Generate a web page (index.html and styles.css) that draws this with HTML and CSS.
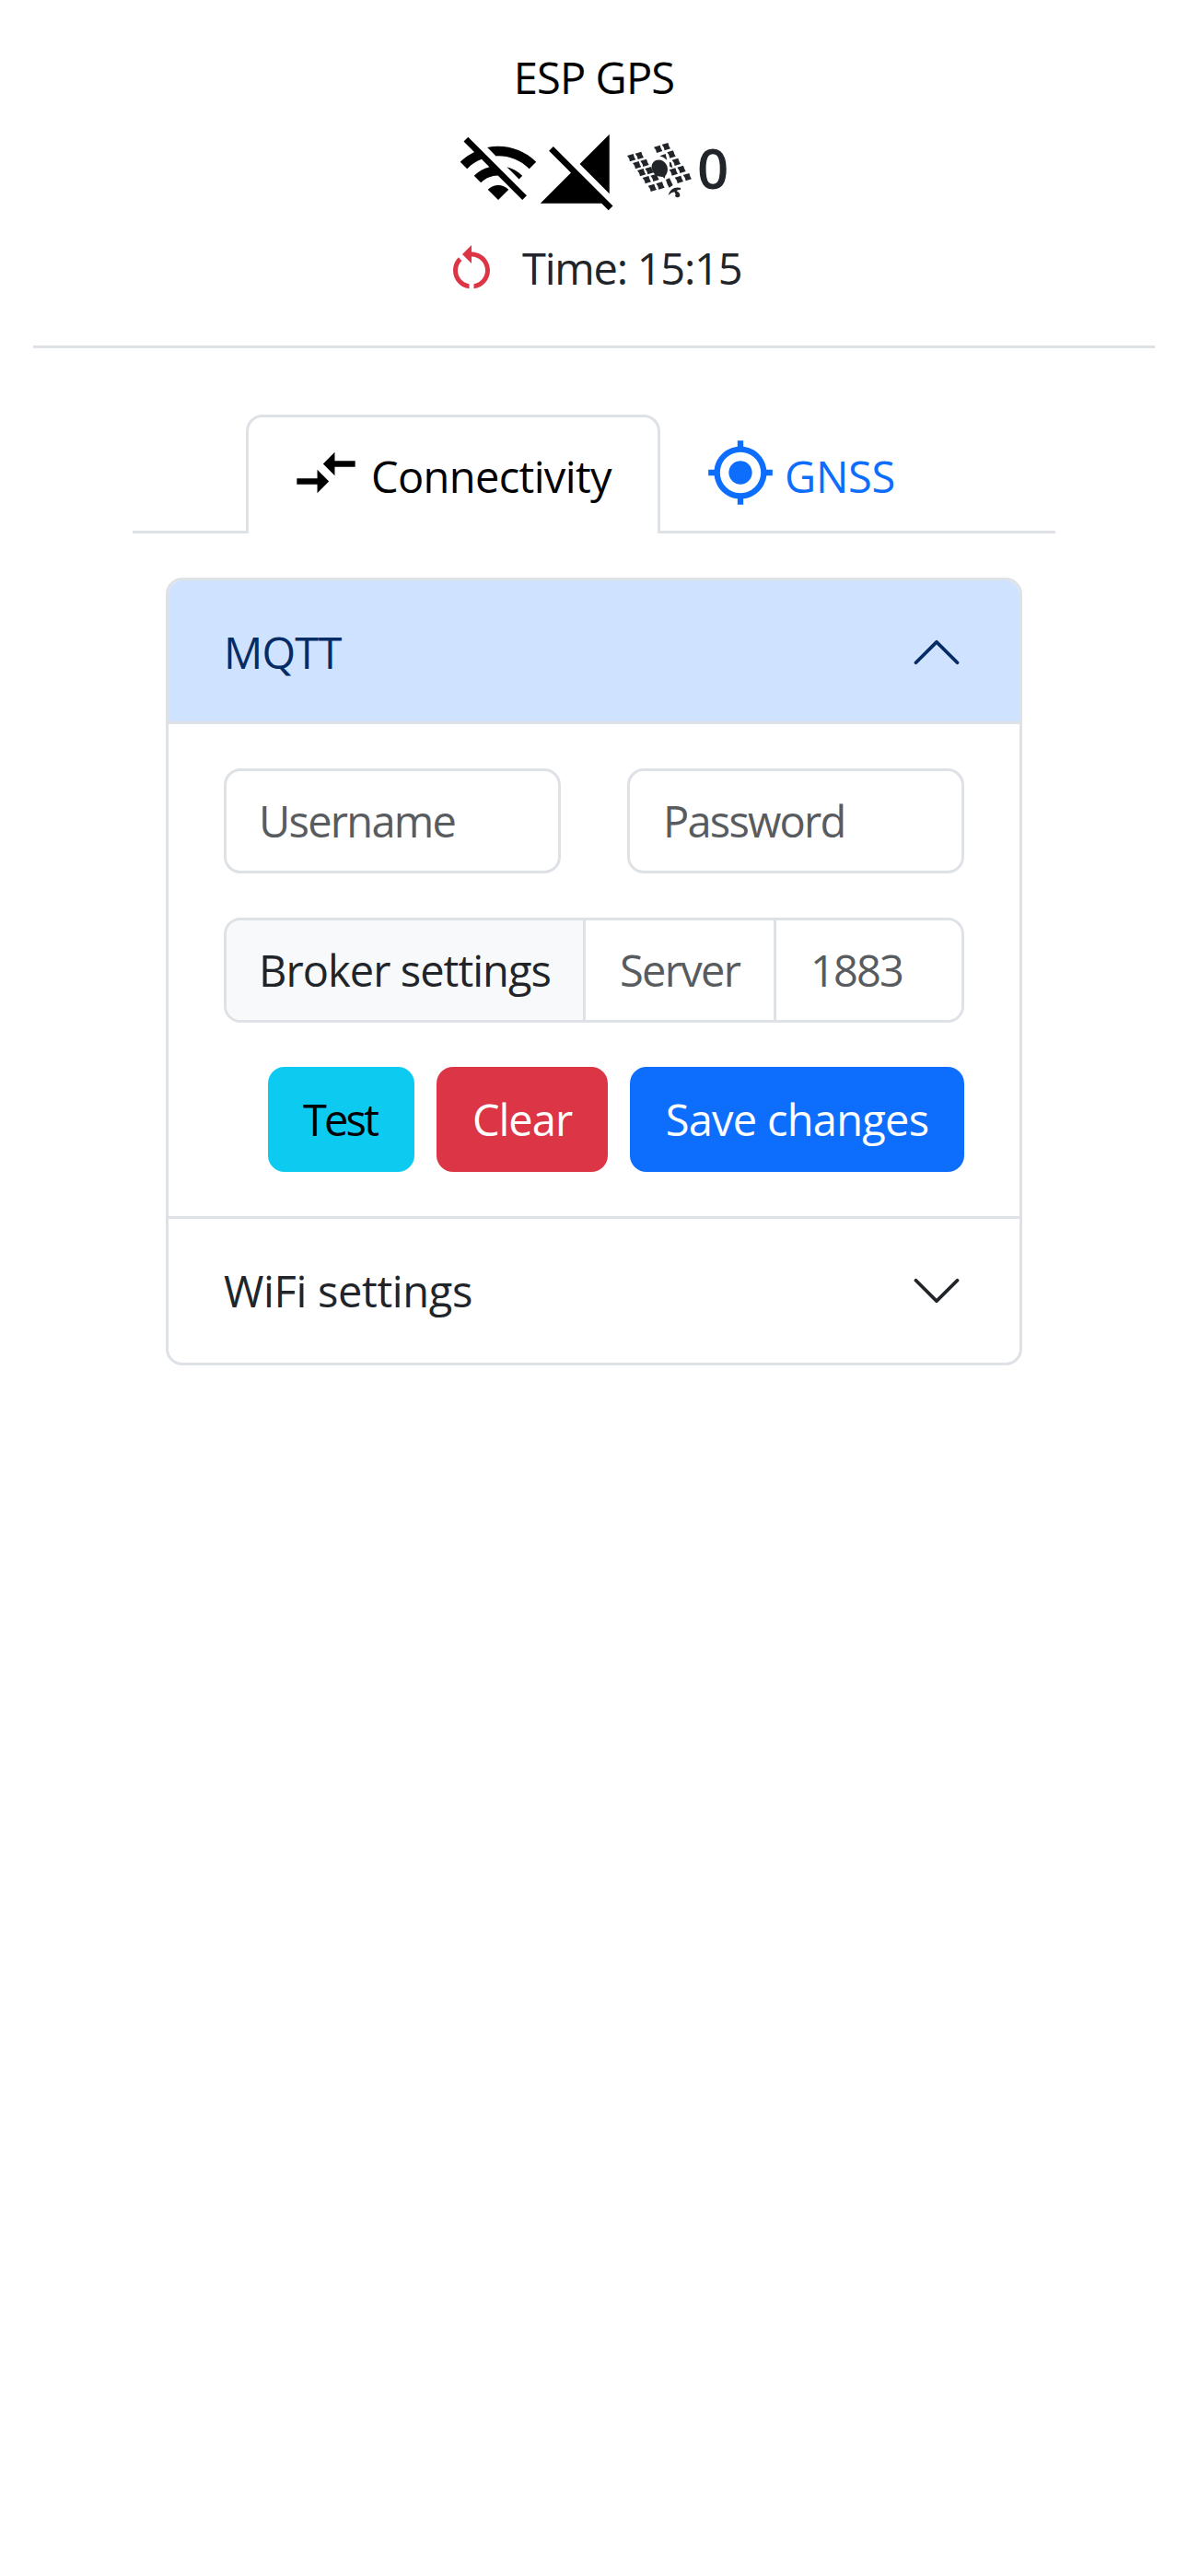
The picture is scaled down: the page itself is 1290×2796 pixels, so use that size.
FILE: index.html
```html
<!DOCTYPE html>
<html lang="en">
<head>
<meta charset="utf-8">
<title>ESP GPS</title>
<link rel="stylesheet" href="styles.css">
</head>
<body>
<header class="header">
  <div class="title">ESP GPS</div>
  <div class="status">
    <svg class="status-icon" viewBox="0 0 24 24"><path d="M22.99 9C19.15 5.16 13.8 3.76 8.84 4.78l2.52 2.52c3.47-.17 6.99 1.05 9.63 3.7l2-2zm-4 4c-1.29-1.29-2.84-2.13-4.49-2.56l3.53 3.53.96-.97zM2 3.05L5.07 6.1C3.6 6.82 2.22 7.78 1 9l1.99 2c1.24-1.24 2.67-2.16 4.2-2.77l2.24 2.24C7.81 10.89 6.27 11.73 5 13v.01L6.99 15c1.36-1.36 3.14-2.04 4.92-2.06L18.98 20l1.27-1.26L3.29 1.79 2 3.05zM9 17l3 3 3-3c-1.65-1.66-4.34-1.66-6 0z"/></svg>
    <svg class="status-icon cellular" viewBox="0 0 24 24"><path d="M21 1l-8.59 8.59L21 18.18V1zM4.77 4.5L3.5 5.77l6.36 6.36L1 21h17.73l2 2L22 21.73 4.77 4.5z"/></svg>
    <svg class="satellite" viewBox="0 0 210 180">
      <defs><path id="cell" d="M-14-6L6-12Q9 0 14 7L-5 13Q-7 1-14-6z"/></defs>
      <use href="#cell" x="14" y="48"/><use href="#cell" x="40" y="41"/>
      <use href="#cell" x="32" y="72"/><use href="#cell" x="57" y="65"/>
      <use href="#cell" x="47" y="96"/><use href="#cell" x="72" y="90"/>
      <use href="#cell" x="64" y="120"/><use href="#cell" x="90" y="113"/>
      <use href="#cell" x="82" y="146"/><use href="#cell" x="108" y="139"/>
      <use href="#cell" x="101" y="20"/><use href="#cell" x="127" y="12"/>
      <path d="M106 43L125 36L130 56Q120 47 106 43z"/><use href="#cell" x="144" y="37"/>
      <path d="M138 63q4-3 6 4l4 13q-8 1-10-4z"/><use href="#cell" x="160" y="62"/>
      <use href="#cell" x="151" y="94"/><use href="#cell" x="177" y="86"/>
      <use href="#cell" x="169" y="119"/><use href="#cell" x="196" y="111"/>
      <path d="M86 62C98 51 119 55 128 71C135 85 132 98 124 108L122 116L116 111C99 111 87 104 82 91C78 80 79 69 86 62z"/>
      <path d="M126 120L138 115L149 138L137 146Q130 136 126 120z"/>
      <path d="M134 171C139 150 157 141 175 147L173 153Q163 153 161 157Q173 163 172 173Q165 182 156 174Q160 168 154 160Q145 161 134 171z"/>
    </svg>
    <span class="count">0</span>
  </div>
  <div class="time">
    <svg class="refresh" viewBox="0 0 24 24"><path d="M12 5V2L8 6l4 4V7c3.31 0 6 2.69 6 6 0 2.97-2.17 5.43-5 5.91v2.02c3.95-.49 7-3.85 7-7.93 0-4.42-3.58-8-8-8zM6 13c0-1.65.67-3.15 1.76-4.24L6.34 7.34C4.9 8.79 4 10.79 4 13c0 4.08 3.05 7.44 7 7.93v-2.02c-2.83-.48-5-2.94-5-5.91z"/></svg>
    <span class="clock">Time: 15:15</span>
  </div>
</header>

<main class="main">
  <nav class="tabs">
    <a class="tab active"><svg class="tab-icon" viewBox="0 0 24 24"><path d="M9.01 14H2v2h7.01v3L13 15l-3.99-4v3zm5.98-1v-3H22V8h-7.01V5L11 9l3.99 4z"/></svg><span class="tab-text connectivity">Connectivity</span></a>
    <a class="tab second"><svg class="tab-icon" viewBox="0 0 24 24"><path d="M12 8c-2.21 0-4 1.79-4 4s1.79 4 4 4 4-1.79 4-4-1.79-4-4-4zm8.94 3c-.46-4.17-3.77-7.48-7.94-7.94V1h-2v2.06C6.83 3.52 3.52 6.83 3.06 11H1v2h2.06c.46 4.17 3.77 7.48 7.94 7.94V23h2v-2.06c4.17-.46 7.48-3.77 7.94-7.94H23v-2h-2.06zM12 19c-3.87 0-7-3.13-7-7s3.13-7 7-7 7 3.13 7 7-3.13 7-7 7z"/></svg><span class="tab-text gnss">GNSS</span></a>
  </nav>

  <section class="accordion">
    <div class="item-header open"><span class="mqtt">MQTT</span>
      <svg class="chevron up" viewBox="0 0 16 16"><path d="M2 5l6 6 6-6"/></svg></div>
    <form class="item-body">
      <div class="credentials">
        <input class="field username" type="text" placeholder="Username">
        <input class="field password" type="text" placeholder="Password">
      </div>
      <div class="group">
        <span class="group-label">Broker settings</span>
        <input class="group-field server" type="text" placeholder="Server">
        <input class="group-field port" type="text" placeholder="1883">
      </div>
      <div class="actions">
        <button class="btn test" type="button">Test</button>
        <button class="btn clear" type="button">Clear</button>
        <button class="btn save" type="button">Save changes</button>
      </div>
    </form>
    <div class="item-header closed"><span class="wifi">WiFi settings</span>
      <svg class="chevron" viewBox="0 0 16 16"><path d="M2 5l6 6 6-6"/></svg></div>
  </section>
</main>
</body>
</html>
```
FILE: styles.css
```css
* { box-sizing: border-box; }
body {
  margin: 0;
  padding: 48px 36px 0;
  background: #fff;
  color: #212529;
  font: 47px/72px "Open Sans", "Noto Sans", sans-serif;
}
svg { display: block; flex: none; fill: currentColor; }
input, button { font: inherit; color: inherit; margin: 0; min-width: 0; }

.header {
  display: flex;
  flex-direction: column;
  height: 330px;
  border-bottom: 3px solid #dee2e6;
}
.title { text-align: center; color: #000; letter-spacing: -.9px; }
.status { display: flex; align-items: center; height: 90px; margin-top: 22px; padding-left: 460px; }
.status-icon { width: 90px; height: 90px; color: #000; }
.cellular { margin-left: -3px; }
.satellite { width: 70px; height: 60px; margin: -4px 0 0 8px; overflow: visible; }
.count { margin: -11px 0 0 6px; font-size: 60px; font-weight: 600; }
.time { display: flex; align-items: center; margin-top: 22px; padding-left: 446px; }
.refresh { width: 60px; height: 60px; color: #dc3545; }
.clock { margin: 1px 0 0 25px; letter-spacing: -1.25px; }

.main { padding: 72px 108px 0; }
.tabs { display: flex; justify-content: center; height: 129px; border-bottom: 3px solid #dee2e6; }
.tab {
  display: flex;
  align-items: center;
  height: 129px;
  padding-left: 46px;
  border: 3px solid transparent;
  border-bottom: 0;
  border-radius: 18px 18px 0 0;
  color: #0d6efd;
}
.tab.active { width: 450px; background: #fff; border-color: #dee2e6; color: #000; }
.tab.second { width: 306px; }
.tab-icon { width: 76px; height: 76px; margin-top: -6px; }
.tab-text { margin-top: 2px; }
.connectivity { margin-left: 11px; letter-spacing: -.65px; }
.gnss { margin-left: 10px; letter-spacing: -.28px; }

.accordion { margin: 48px 36px 0; border: 3px solid #dee2e6; border-radius: 18px; overflow: hidden; }
.item-header { display: flex; align-items: center; justify-content: space-between; height: 156px; padding: 0 60px; }
.item-header.open { padding-top: 3px; background: #cfe2ff; color: #052c65; border-bottom: 3px solid #dee2e6; }
.item-header.closed { border-top: 3px solid #dee2e6; height: 159px; }
.mqtt { letter-spacing: -.74px; }
.wifi { letter-spacing: -.34px; }
.chevron { width: 60px; height: 60px; fill: none; stroke: currentColor; stroke-linecap: round; stroke-linejoin: round; }
.chevron.up { transform: rotate(180deg); }

.item-body { display: flex; flex-direction: column; gap: 48px; padding: 48px 60px; }
.credentials { display: grid; grid-template-columns: 1fr 1fr; gap: 72px; }
.field { width: 100%; height: 114px; padding: 0 35px; background: #fff; border: 3px solid #dee2e6; border-radius: 18px; }
input::placeholder { color: #595c5f; opacity: 1; }
.username { letter-spacing: -1.74px; }
.password { padding-left: 36px; letter-spacing: -1.8px; }

.group { display: flex; height: 114px; border: 3px solid #dee2e6; border-radius: 18px; overflow: hidden; }
.group-label { width: 390px; padding: 18px 0 0 35px; background: #f8f9fa; border-right: 3px solid #dee2e6; letter-spacing: -.95px; white-space: nowrap; }
.group-field { height: 108px; padding: 0 0 0 37px; border: 0; background: #fff; }
.server { width: 207px; border-right: 3px solid #dee2e6; letter-spacing: -1.7px; }
.port { flex: 1; letter-spacing: -1.87px; }

.actions { display: flex; justify-content: flex-end; gap: 24px; }
.btn { height: 114px; padding: 0; border: 0; border-radius: 18px; color: #fff; white-space: nowrap; }
.test { width: 159px; padding-right: 3px; background: #0dcaf0; color: #000; letter-spacing: -2.8px; }
.clear { width: 186px; background: #dc3545; letter-spacing: -.99px; }
.save { width: 363px; background: #0d6efd; letter-spacing: -.74px; }
```
